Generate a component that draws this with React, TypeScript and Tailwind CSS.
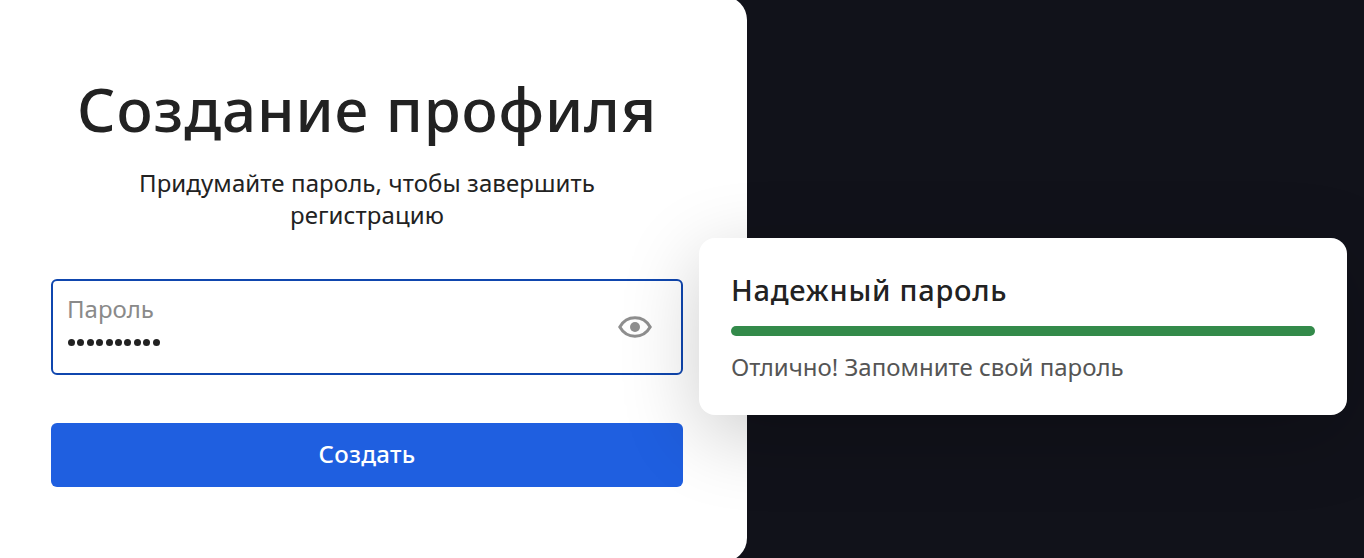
import React from "react";

export default function App() {
  return (
    <div className="relative h-[558px] w-full overflow-hidden bg-[#11121a] font-['Noto_Sans',sans-serif]">
      <div className="mt-[-4px] flex h-[566px] w-[747px] flex-col rounded-r-[24px] bg-white pl-[51px] pr-[64px] pt-[75px]">
        <h1 className="text-center text-[60px] font-medium leading-[76px] tracking-[0.9px] text-[#222222]">Создание профиля</h1>
        <p className="mx-auto mt-[20px] w-[500px] text-center text-[24px] leading-[32px] tracking-[0.1px] text-[#222222]">
          Придумайте пароль, чтобы завершить регистрацию
        </p>
        <div className="mt-[48px] flex h-[96px] items-center justify-between rounded-[6px] border-2 border-[#0f46ae] pl-[14px] pr-[29px]">
          <div className="flex -translate-y-[7px] flex-col">
            <span className="text-[24px] leading-[30px] text-[#8a8a8a]">Пароль</span>
            <span className="mt-[15px] flex gap-[2.4px] pl-[1px]">
              {Array.from({ length: 10 }).map((_, i) => (
                <span key={i} className="h-[7px] w-[7px] rounded-full bg-[#222222]" />
              ))}
            </span>
          </div>
          <svg width="34" height="24" viewBox="0 0 34 24" fill="none">
            <path d="M1.8 12C5 6.4 10.6 2.8 17 2.8S29 6.4 32.2 12C29 17.600 23.400 21.200 17 21.200S5 17.600 1.800 12Z" stroke="#8f8f8f" strokeWidth="3" />
            <circle cx="17" cy="12" r="5" fill="#8f8f8f" />
          </svg>
        </div>
        <button className="mt-[48px] h-[64px] rounded-[6px] bg-[#1f5fe0] pb-[2px] text-[24px] font-medium tracking-[0.3px] text-white">Создать</button>
      </div>
      <div className="absolute left-[699px] top-[238px] h-[177px] w-[648px] rounded-[16px] bg-white px-[32px] pt-[31px] shadow-[0_20px_80px_rgba(0,0,0,0.2)]">
        <div className="text-[29px] font-medium leading-[42px] tracking-[0.75px] text-[#222222]">Надежный пароль</div>
        <div className="mt-[15px] h-[10px] w-full rounded-full bg-[#338a4a]" />
        <div className="mt-[15px] text-[24px] leading-[32px] text-[#555555]">Отлично! Запомните свой пароль</div>
      </div>
    </div>
  );
}
